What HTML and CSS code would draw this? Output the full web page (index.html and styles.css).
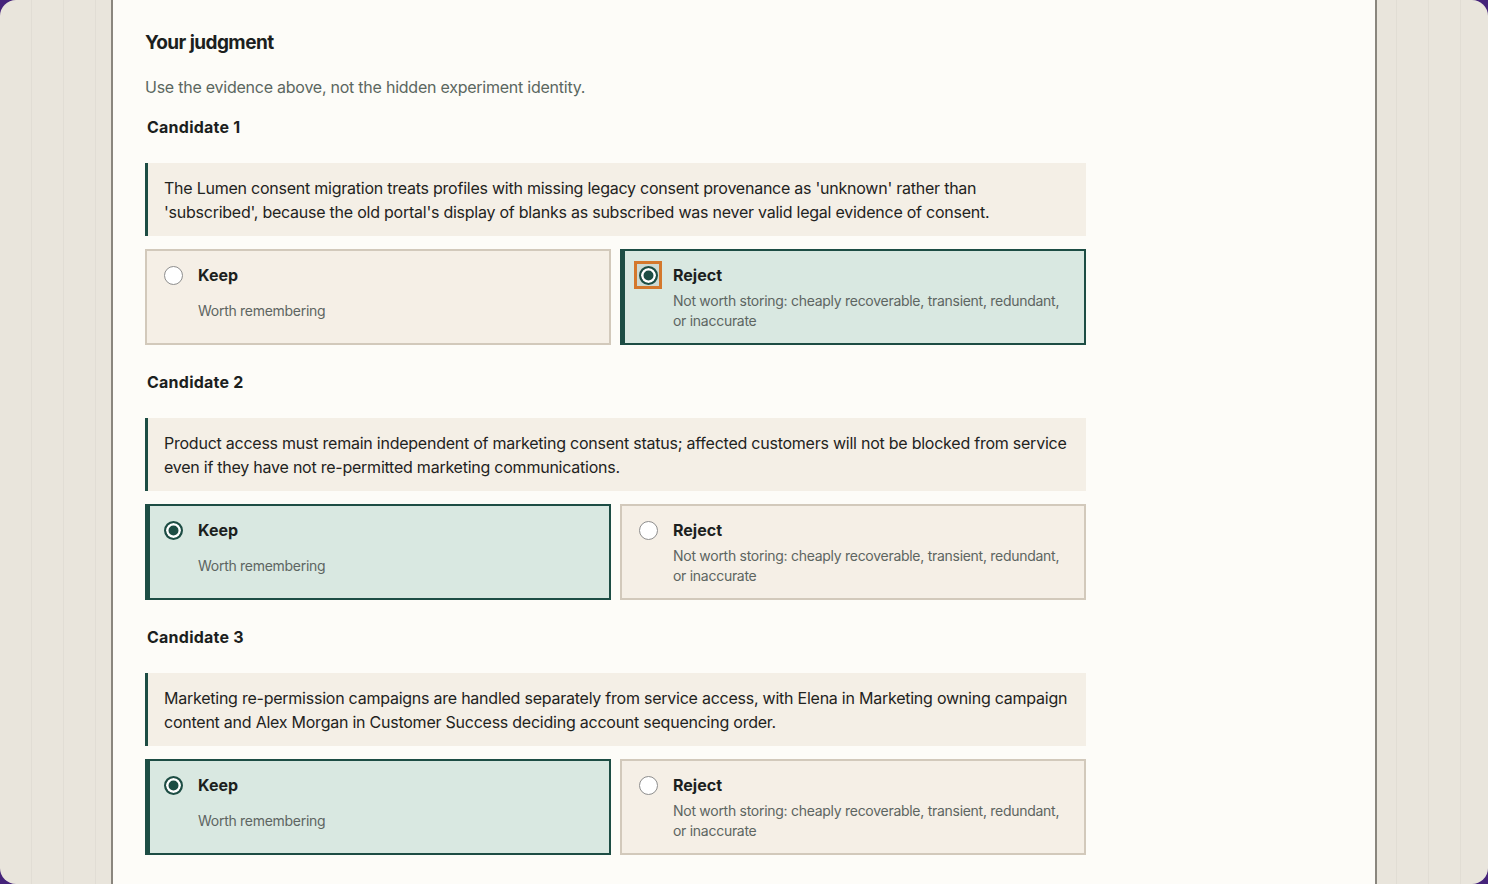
FILE: index.html
```html
<!DOCTYPE html>
<html>
<head>
    <title>Your judgment</title>
    <link rel="stylesheet" href="styles.css">
</head>
<body>
    <div class="frame">
        <main class="panel">
            <h2>Your judgment</h2>
            <p class="intro">Use the evidence above, not the hidden experiment identity.</p>

            <fieldset class="candidate">
                <legend class="candidate-title">Candidate 1</legend>
                <blockquote class="claim">The Lumen consent migration treats profiles with missing legacy consent provenance as 'unknown' rather than 'subscribed', because the old portal's display of blanks as subscribed was never valid legal evidence of consent.</blockquote>
                <div class="options">
                    <label class="option">
                        <span class="radio-box"><input type="radio" class="radio" name="c1" value="keep"></span>
                        <span class="option-text">
                            <span class="option-title">Keep</span>
                            <span class="option-desc">Worth remembering</span>
                        </span>
                    </label>
                    <label class="option is-selected">
                        <span class="radio-box is-focused"><input type="radio" class="radio" name="c1" value="reject" checked></span>
                        <span class="option-text">
                            <span class="option-title">Reject</span>
                            <span class="option-desc">Not worth storing: cheaply recoverable, transient, redundant, or inaccurate</span>
                        </span>
                    </label>
                </div>
            </fieldset>

            <fieldset class="candidate">
                <legend class="candidate-title">Candidate 2</legend>
                <blockquote class="claim">Product access must remain independent of marketing consent status; affected customers will not be blocked from service even if they have not re-permitted marketing communications.</blockquote>
                <div class="options">
                    <label class="option is-selected">
                        <span class="radio-box"><input type="radio" class="radio" name="c2" value="keep" checked></span>
                        <span class="option-text">
                            <span class="option-title">Keep</span>
                            <span class="option-desc">Worth remembering</span>
                        </span>
                    </label>
                    <label class="option">
                        <span class="radio-box"><input type="radio" class="radio" name="c2" value="reject"></span>
                        <span class="option-text">
                            <span class="option-title">Reject</span>
                            <span class="option-desc">Not worth storing: cheaply recoverable, transient, redundant, or inaccurate</span>
                        </span>
                    </label>
                </div>
            </fieldset>

            <fieldset class="candidate">
                <legend class="candidate-title">Candidate 3</legend>
                <blockquote class="claim">Marketing re-permission campaigns are handled separately from service access, with Elena in Marketing owning campaign content and Alex Morgan in Customer Success deciding account sequencing order.</blockquote>
                <div class="options">
                    <label class="option is-selected">
                        <span class="radio-box"><input type="radio" class="radio" name="c3" value="keep" checked></span>
                        <span class="option-text">
                            <span class="option-title">Keep</span>
                            <span class="option-desc">Worth remembering</span>
                        </span>
                    </label>
                    <label class="option">
                        <span class="radio-box"><input type="radio" class="radio" name="c3" value="reject"></span>
                        <span class="option-text">
                            <span class="option-title">Reject</span>
                            <span class="option-desc">Not worth storing: cheaply recoverable, transient, redundant, or inaccurate</span>
                        </span>
                    </label>
                </div>
            </fieldset>
        </main>
    </div>
</body>
</html>
```

FILE: styles.css
```css
* {
    box-sizing: border-box;
}

body {
    margin: 0;
    height: 100vh;
    overflow: hidden;
    background-color: #45237a;
    color: #1c1f1e;
    font-family: 'Inter', 'Liberation Sans', Arial, sans-serif;
    letter-spacing: -0.015em;
}

.frame {
    height: 100vh;
    border-radius: 16px;
    overflow: hidden;
    background-color: #e9e5dc;
    background-image:
        repeating-linear-gradient(90deg, transparent 0 31px, rgba(0, 0, 0, 0.035) 31px 32px),
        repeating-linear-gradient(90deg, transparent 0 19px, rgba(0, 0, 0, 0.035) 19px 20px, transparent 20px 32px);
    background-size: 111px 100%, 111px 100%;
    background-position: left top, right top;
    background-repeat: no-repeat;
}

.panel {
    display: block;
    width: 1266px;
    height: 100%;
    margin: 0 auto;
    padding: 29px 32px 0;
    background: #fdfcf8;
    border-left: 2px solid #8a867e;
    border-right: 2px solid #8a867e;
}

h2 {
    margin: 0;
    font-size: 19px;
    line-height: 28px;
    font-weight: 700;
    letter-spacing: -0.03em;
}

.intro {
    margin: 18px 0 16px;
    font-size: 16px;
    line-height: 24px;
    color: #5b6760;
}

.candidate {
    width: 941px;
    margin: 0 0 25px;
    padding: 0;
    border: none;
    min-width: 0;
}

.candidate-title {
    display: block;
    float: left;
    width: 100%;
    margin: 0 0 24px;
    padding: 0 2px;
    font-size: 16px;
    line-height: 24px;
    font-weight: 700;
    letter-spacing: 0.015em;
}

.claim {
    clear: both;
    margin: 0 0 13px;
    padding: 13px 14px 12px 16px;
    background: #f4efe6;
    border-left: 3px solid #1d4d44;
    font-size: 16px;
    line-height: 24px;
    color: #1f2321;
}

.options {
    display: grid;
    grid-template-columns: 1fr 1fr;
    gap: 9px;
}

.option {
    display: grid;
    grid-template-columns: 20px 1fr;
    column-gap: 15px;
    padding: 12px 16px;
    background: #f5efe6;
    border: 2px solid #d2c9bb;
    cursor: pointer;
}

.option.is-selected {
    background: #d9e8e1;
    border-color: #1d4d44;
    box-shadow: inset 3px 0 0 #1d4d44;
}

.radio-box {
    display: flex;
    align-items: center;
    justify-content: center;
    width: 20px;
    height: 20px;
    margin-top: 2px;
}

.radio-box.is-focused {
    width: 22px;
    height: 22px;
    margin: 1px 0 0 -1px;
    background: #cddad3;
    outline: 3px solid #d4782c;
}

.radio {
    appearance: none;
    -webkit-appearance: none;
    flex: none;
    width: 19px;
    height: 19px;
    margin: 0;
    border: 1px solid #8e8e8e;
    border-radius: 50%;
    background: #fff;
    cursor: pointer;
}

.radio:checked {
    border: 2px solid #1d4d44;
    background: #1d4d44;
    box-shadow: inset 0 0 0 2.5px #fff;
}

.option-text {
    display: flex;
    flex-direction: column;
}

.option-title {
    font-size: 16px;
    line-height: 24px;
    font-weight: 700;
    letter-spacing: 0;
}

.option-desc {
    flex: 1;
    display: flex;
    align-items: center;
    margin-top: 4px;
    font-size: 14px;
    line-height: 20px;
    color: #5d6561;
    letter-spacing: -0.02em;
}
```
